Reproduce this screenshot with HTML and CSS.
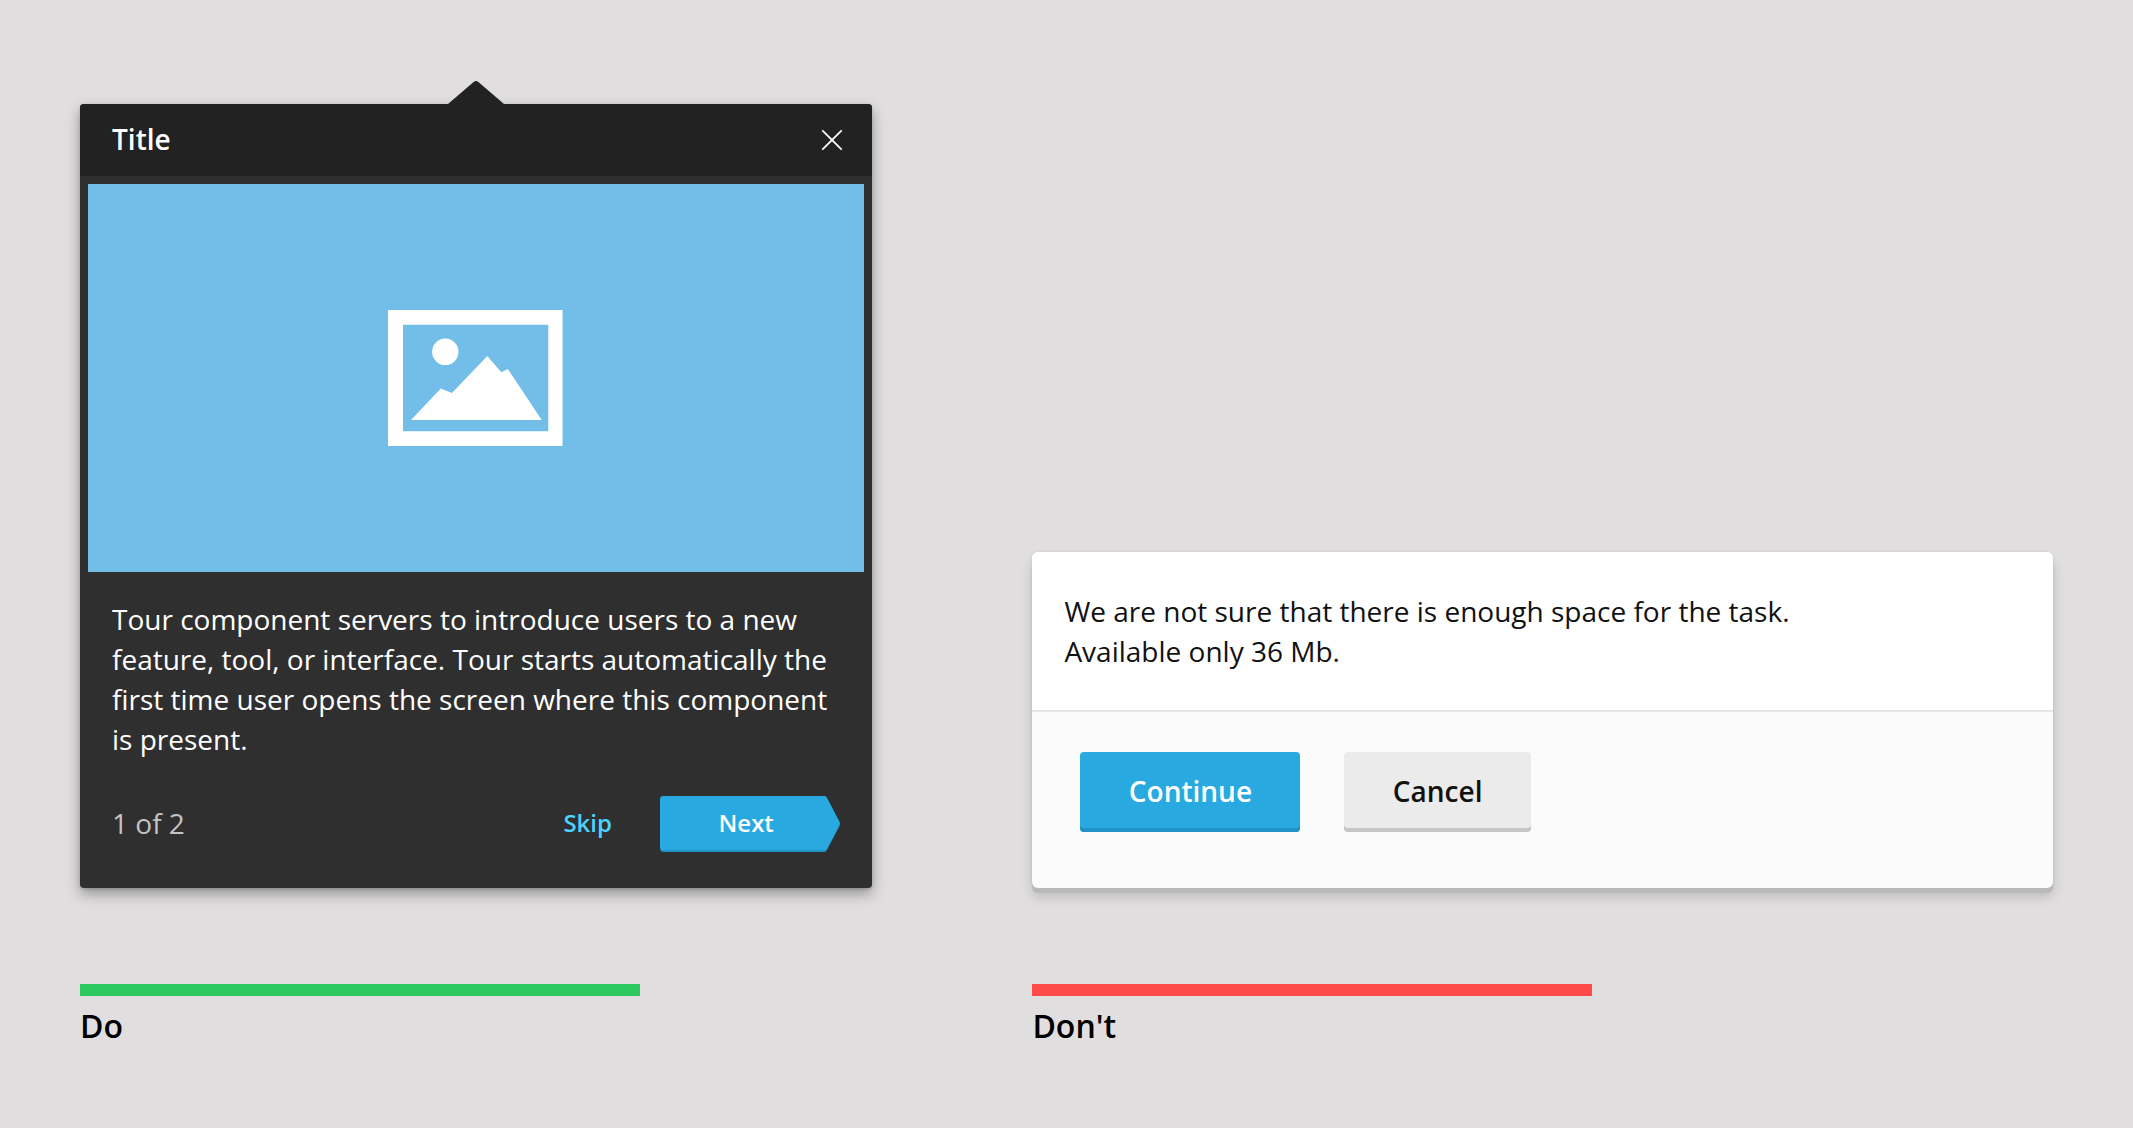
FILE: index.html
```html
<!DOCTYPE html>
<html lang="en">
<head>
<meta charset="utf-8">
<title>Tour usage</title>
<link rel="stylesheet" href="styles.css">
</head>
<body>
<main class="examples">
  <section class="example example-do">
    <article class="tour">
      <svg class="tour-arrow" width="56" height="25" viewBox="0 0 56 25" aria-hidden="true"><path d="M0 24 L25.6 2 Q28 0 30.4 2 L56 24V25H0Z" fill="#222"/></svg>
      <header class="tour-header">
        <h2 class="tour-title">Title</h2>
        <svg class="tour-close" width="22" height="22" viewBox="0 0 22 22" aria-hidden="true"><path d="M1.3 1.3 20.7 20.7M20.7 1.3 1.3 20.7" stroke="#fff" stroke-width="1.8" fill="none"/></svg>
      </header>
      <div class="tour-image">
        <svg class="picture" width="175" height="136" viewBox="0 0 175 136" aria-hidden="true">
          <path fill="#fff" fill-rule="evenodd" d="M0 0H174.5V136H0ZM15 14.7V121.3H160.3V14.7Z"/>
          <circle cx="57.3" cy="41.8" r="13.2" fill="#fff"/>
          <path fill="#fff" d="M23 110 52.8 78.5 64 83 99.3 46 113.3 62.3 119.8 59 153.7 110Z"/>
        </svg>
      </div>
      <p class="tour-text">Tour component servers to introduce users to a new feature, tool, or interface. Tour starts automatically the first time user opens the screen where this component is present.</p>
      <footer class="tour-footer">
        <span class="tour-step">1 of 2</span>
        <a class="tour-skip">Skip</a>
        <div class="tour-next">
          <svg class="tour-next-shape" width="180" height="56" viewBox="0 0 180 56" aria-hidden="true">
            <path fill="#2392c4" d="M4 0H164Q166 0 167 2L179.5 26Q180 28 179.5 30L167 54Q166 56 164 56H4Q0 56 0 52V4Q0 0 4 0Z"/>
            <path fill="#28a9e0" d="M4 0H164Q166 0 167 2L179.5 26Q180 27.5 179.5 29L167 52.3Q166 54.3 164 54.3H4Q0 54.3 0 50.3V4Q0 0 4 0Z"/>
          </svg>
          <span class="tour-next-label">Next</span>
        </div>
      </footer>
    </article>
    <div class="bar bar-do"></div>
    <h3 class="verdict">Do</h3>
  </section>
  <section class="example example-dont">
    <article class="dialog">
      <p class="dialog-text">We are not sure that there is enough space for the task.<br>Available only 36 Mb.</p>
      <footer class="dialog-footer">
        <button class="button button-primary">Continue</button>
        <button class="button button-plain">Cancel</button>
      </footer>
    </article>
    <div class="bar bar-dont"></div>
    <h3 class="verdict">Don't</h3>
  </section>
</main>
</body>
</html>
```
FILE: styles.css
```css
* { box-sizing: border-box; }
body {
  margin: 0;
  background: #e0dedf;
  font-family: "Open Sans", sans-serif;
  font-size: 28px;
  line-height: 40px;
}
h2, h3, p { margin: 0; }
svg { display: block; }

.examples {
  display: flex;
  justify-content: space-between;
  align-items: flex-end;
  width: 2133px;
  height: 1128px;
  padding: 0 80px 80px;
}
.example-do { width: 792px; }
.example-dont { width: 1020.6px; }

.tour {
  position: relative;
  height: 784px;
  background: #2f2f2f;
  border-radius: 4px;
  color: #fff;
  box-shadow: 0 6px 14px rgba(0, 0, 0, .34), 0 1px 3px rgba(0, 0, 0, .15);
}
.tour-arrow { position: absolute; left: 368px; top: -24px; }
.tour-header {
  display: flex;
  align-items: center;
  justify-content: space-between;
  height: 72px;
  padding: 0 29px 0 32px;
  background: #222;
  border-radius: 4px 4px 0 0;
}
.tour-title {
  padding-bottom: 2px;
  font-size: 28px;
  font-weight: 600;
}
.tour-close { margin-bottom: 1px; }
.tour-image {
  display: flex;
  align-items: center;
  justify-content: center;
  height: 388px;
  margin: 8px 8px 0;
  padding-right: 1.5px;
  background: #72bee9;
}
.tour-text { padding: 27px 32px 0; }
.tour-footer {
  display: flex;
  align-items: center;
  padding: 37px 32px 0;
  font-size: 24px;
}
.tour-step { flex: 1; padding-bottom: 2px; color: #c3c3c3; font-size: 28px; }
.tour-skip { margin-right: 48px; padding-bottom: 2px; color: #4bd3ff; font-weight: 600; }
.tour-next {
  position: relative;
  width: 180px;
  height: 56px;
  padding: 7px 0 0 58.5px;
  font-weight: 600;
}
.tour-next-shape { position: absolute; inset: 0; }
.tour-next-label { position: relative; }

.dialog {
  height: 336px;
  background: #fbfbfb;
  border-radius: 6px;
  box-shadow: 0 5px 0 #bab9ba, 0 9px 12px rgba(0, 0, 0, .16), 0 0 3px rgba(0, 0, 0, .08);
}
.dialog-text {
  height: 160px;
  padding: 39px 32px 0;
  background: #fff;
  border-bottom: 2px solid #e6e6e6;
  border-radius: 6px 6px 0 0;
  color: #111;
}
.dialog-footer { display: flex; gap: 44px; padding: 40px 48px; }
.button {
  height: 80px;
  padding: 0 0 3px;
  border: 0;
  border-radius: 4px;
  font: 600 28px/40px "Open Sans", sans-serif;
}
.button-primary {
  width: 220px;
  background: #28a9e0;
  color: #fff;
  box-shadow: inset 0 -4px #2392c4;
}
.button-plain {
  width: 186.5px;
  background: #ebebeb;
  color: #111;
  box-shadow: inset 0 -4px #c5c5c5;
}

.bar { width: 560px; height: 12px; margin-top: 96px; }
.bar-do { background: #2bc75f; }
.bar-dont { background: #ff4a4a; }
.verdict {
  height: 52px;
  padding-top: 8px;
  font-size: 32px;
  font-weight: 600;
  line-height: 44px;
  color: #000;
}
```
